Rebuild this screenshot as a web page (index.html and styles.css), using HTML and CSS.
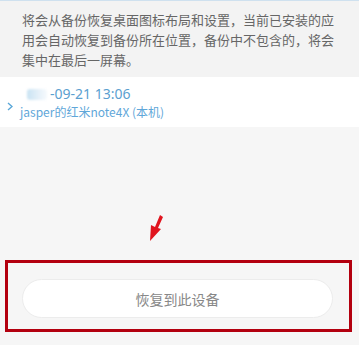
FILE: index.html
```html
<!DOCTYPE html>
<html lang="zh-CN">

<head>
  <meta charset="UTF-8">
  <meta name="viewport" content="width=device-width, initial-scale=1.0">
  <title>恢复备份</title>
  <link rel="stylesheet" href="styles.css">
</head>

<body>
  <div class="notice">
    将会从备份恢复桌面图标布局和设置，当前已安装的应用会自动恢复到备份所在位置，备份中不包含的，将会集中在最后一屏幕。
  </div>

  <div class="backupItem">
    <span class="chevron">
      <svg width="6" height="9" viewBox="0 0 6 9"><path d="M1 1 L5 4.5 L1 8" fill="none" stroke="#5aa7d8" stroke-width="1.4"/></svg>
    </span>
    <div class="backupInfo">
      <div class="backupDate"><span class="blurIcon"></span>-09-21 13:06</div>
      <div class="backupDevice">jasper的红米note4X (本机)</div>
    </div>
  </div>

  <div class="bottomArea">
    <div class="arrowWrap">
      <svg width="16" height="28" viewBox="0 0 16 28">
        <path d="M12 1 L15 3 L10 14 L13 15 L2 27 L3 11 L7 13 Z" fill="#e0141e"/>
      </svg>
    </div>
    <div class="highlight">
      <button class="restoreButton">恢复到此设备</button>
    </div>
  </div>
</body>

</html>
```
FILE: styles.css
```css
body {
  margin: 0;
  font-family: "Noto Sans CJK SC", "Noto Sans", sans-serif;
  background-color: #f6f6f6;
  width: 359px;
  height: 345px;
  overflow: hidden;
}

.notice {
  border-top: 1px solid #cfe1ef;
  background-color: #f3f3f3;
  color: #666;
  font-size: 13px;
  line-height: 20px;
  padding: 9px 18px 7px 22px;
  height: 60px;
}

.backupItem {
  display: flex;
  align-items: center;
  background: #fff;
  height: 50px;
}

.chevron {
  width: 20px;
  padding-left: 7px;
  margin-top: 4px;
  box-sizing: border-box;
}

.backupInfo {
  display: flex;
  flex-direction: column;
}

.backupDate {
  display: flex;
  align-items: center;
  color: #5b9fd0;
  font-family: "Noto Sans", sans-serif;
  font-size: 14px;
  line-height: 20px;
  padding-left: 7px;
}

.blurIcon {
  width: 20px;
  height: 11px;
  margin-right: 3px;
  border-radius: 3px;
  background: linear-gradient(90deg, #c9e3f3, #e6f1f9 60%, #f6fafd);
  filter: blur(1.2px);
}

.backupDevice {
  color: #5fa7d9;
  font-size: 12px;
  line-height: 16px;
}

.bottomArea {
  padding-top: 87px;
}

.arrowWrap {
  padding-left: 148px;
  height: 46px;
}

.highlight {
  margin: 0 7px 0 5px;
  border: 3px solid #b3000f;
  padding: 16px 16px 11px 14px;
}

.restoreButton {
  display: block;
  width: 100%;
  height: 39px;
  border: 1px solid #ececec;
  border-radius: 20px;
  background: #fff;
  color: #888;
  font-family: "Noto Sans CJK SC", sans-serif;
  font-size: 14px;
}
```
